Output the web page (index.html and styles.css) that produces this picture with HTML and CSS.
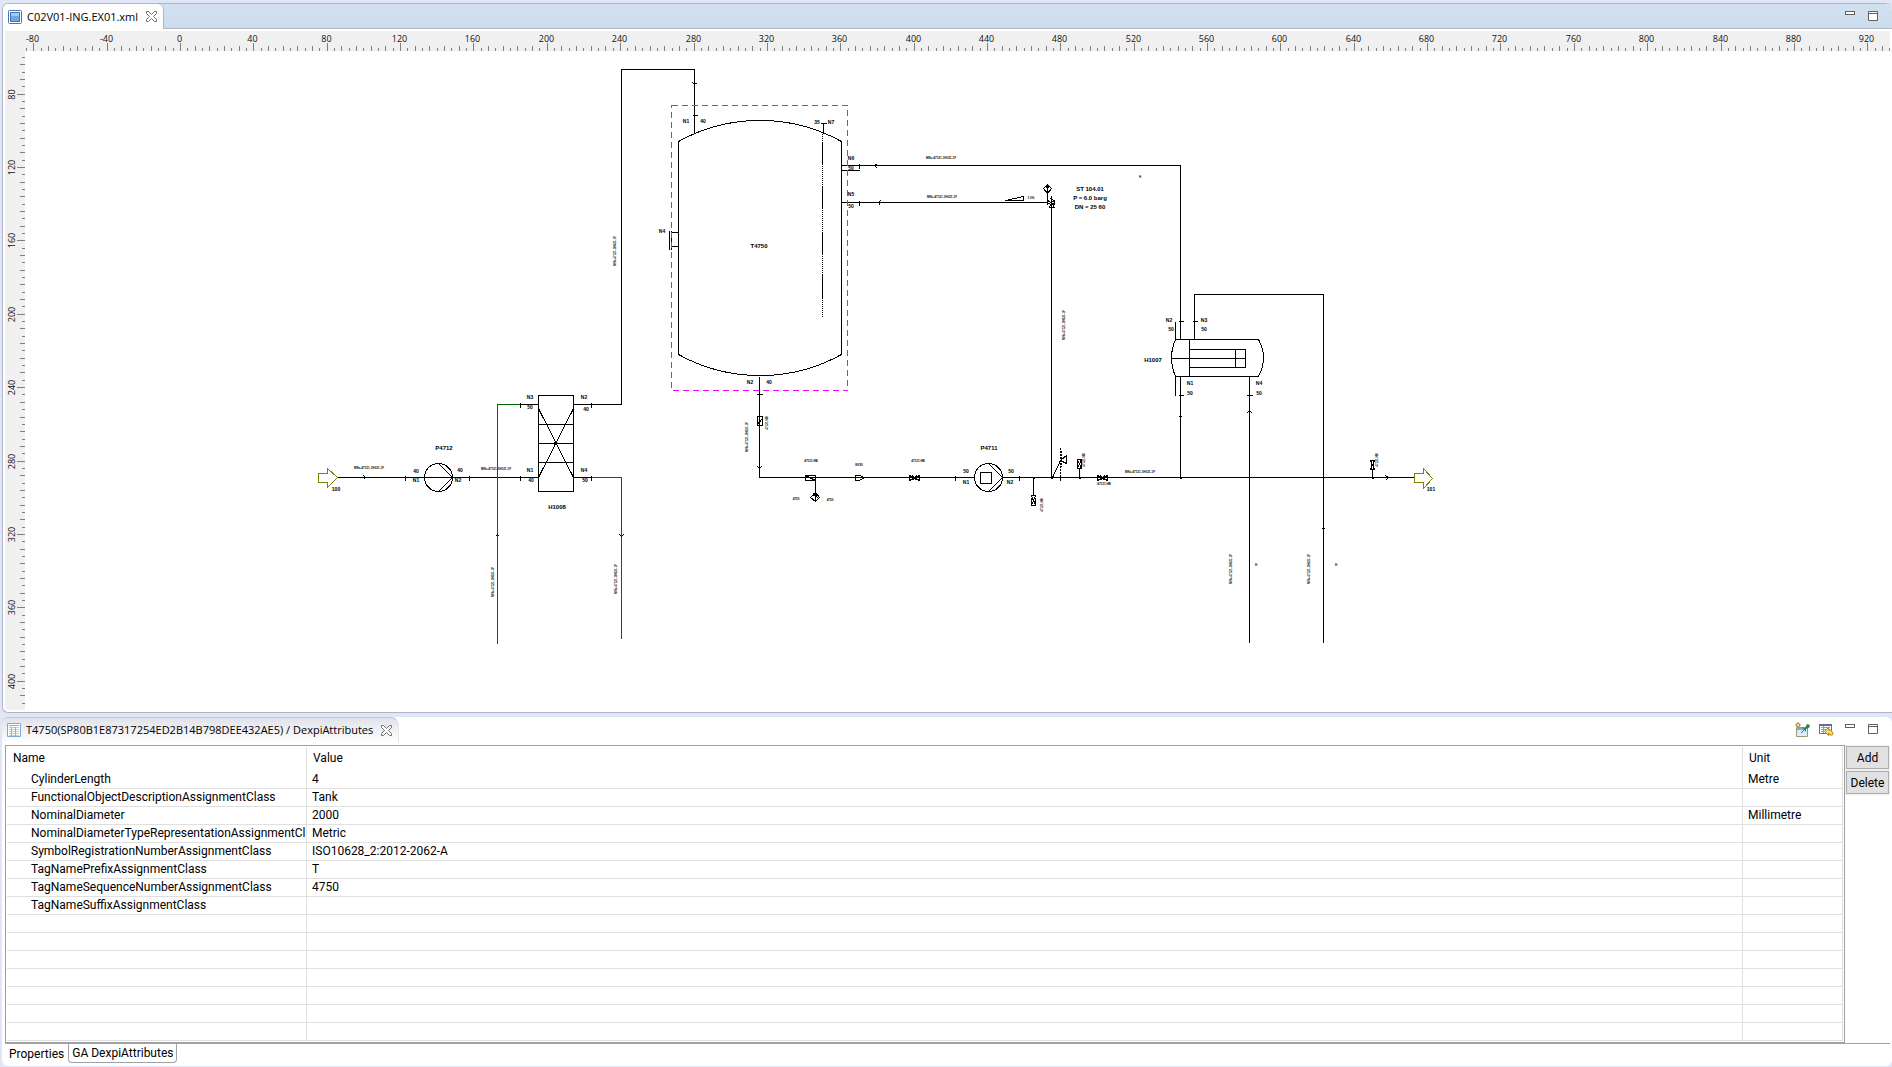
FILE: index.html
```
<!DOCTYPE html>
<html lang="en">
<head>
<meta charset="utf-8">
<title>C02V01-ING.EX01.xml</title>
<link rel="stylesheet" href="styles.css">
</head>
<body>
<svg class="defs" aria-hidden="true">
  <defs>
    <symbol id="close" viewBox="0 0 11 11"><path d="M.5 .5h2l3 3 3-3h2v2l-3 3 3 3v2h-2l-3-3-3 3h-2v-2l3-3-3-3z" fill="#fff" stroke="#6e6e6e"/></symbol>
    <symbol id="min" viewBox="0 0 10 11"><rect x=".5" y=".5" width="9" height="3" fill="#fff" stroke="#606060"/></symbol>
    <symbol id="max" viewBox="0 0 10 11"><path d="M.5 .5h9v9h-9zM0 2.5h10" fill="#fff" stroke="#606060"/></symbol>
  </defs>
</svg>

<main class="panel editor">
  <header class="bar">
    <div class="tab tab-editor">
      <svg class="icon" viewBox="0 0 14 14" width="14" height="14"><rect x=".5" y=".5" width="13" height="13" rx="1" fill="#fff" stroke="#4a72b0"/><rect x="2" y="2" width="10" height="10" fill="#4a72b0"/><path d="M3 3h8v4H3z" fill="#9bd0ea"/><path d="M3 6h8v5H3z" fill="#6ea8dc"/></svg>
      <span>C02V01-ING.EX01.xml</span>
      <button class="ghost" aria-label="Close editor"><svg width="11" height="11"><use href="#close"/></svg></button>
    </div>
    <div class="tools">
      <button class="ghost" aria-label="Minimize editor"><svg width="10" height="11"><use href="#min"/></svg></button>
      <button class="ghost" aria-label="Maximize editor"><svg width="10" height="11"><use href="#max"/></svg></button>
    </div>
  </header>
  <div class="sheet">
    <svg class="ruler ruler-x" id="ruler-x"></svg>
    <svg class="ruler ruler-y" id="ruler-y"></svg>
    <svg class="canvas" role="img" aria-label="Piping and instrumentation diagram">
      <g class="ink" transform="translate(-24.5 -50.5)">
        <!-- process lines -->
        <path d="M573 404H621V69H694V133"/>
        <path d="M841 165H1180V339M1180 376V477M841 170H859"/>
        <path d="M841 202H1047M1051 203V477"/>
        <path d="M759 376V477H974M1002 477H1414"/>
        <path d="M337 477H538M520 404H538M573 477H591"/>
        <path d="M1194 339V294H1323V642M1249 376V642"/>
        <path class="green" d="M520 404H497V643M591 477H621V638"/>

        <!-- flanges -->
        <path d="M692 115h5M820 123h6M823 123v10M859 163v5M859 200v5M756 394h6M955 475v5M1019 475v5M405 475v5M469 475v5M520 475v5M520 402v5M591 402v5M591 475v5M1178 321h5M1192 321h5M1178 395h5M1246 395h6M1060 475v5"/>
        <!-- flow arrows -->
        <path d="M692 82l2 2 3-2M877 163l-3 2 3 3M880 200l-2 2 2 3M757 466l2 2 2-2M363 475l2 2-2 2M495 536l2-2 2 2M619 534l2 2 2-2M1178 417l2-2 2 2M1246 413l3-3 3 3M1321 529l2-2 2 2M1385 475l3 2-3 3"/>

        <!-- tank -->
        <path d="M678 141V354A168 168 0 0 0 841 354V141A168 168 0 0 0 678 141Z"/>
        <path d="M671 232H678M671 246H678M669 230V249M671 230V249"/>
        <path stroke-dasharray="1 1" d="M822 133V316"/>
        <path d="M822 141V164M822 185V207M822 231V253M822 273V297"/>
        <rect class="selection" x="671" y="105" width="176" height="285"/>

        <!-- column -->
        <path d="M538 395H573V491H538ZM538 424H573M538 443H573M538 462H573M538 408L573 477M573 408L538 477"/>
        <rect class="solid" x="554" y="442" width="2" height="2"/>

        <!-- exchanger -->
        <path d="M1175 339H1258Q1268 357 1258 376H1175Q1167 357 1175 339M1189 339V376M1189 349H1245V367H1189M1171 358H1245M1235 349V367M1175 321V339M1175 376V395"/>

        <!-- pumps -->
        <circle cx="438" cy="477" r="14"/><path d="M438 463L452 477 438 491"/>
        <circle cx="988" cy="477" r="14"/><path d="M988 463L1002 477 988 491M980 472H991V483H980Z"/>

        <!-- off-page connectors -->
        <path class="olive" d="M318 473H327V468L337 477 327 487V482H318ZM1414 473H1423V468L1432 478 1423 488V482H1414Z"/>

        <!-- valves and fittings -->
        <path d="M757 416H762V425H757ZM757 424L762 418"/>
        <path d="M805 475H815V480H805ZM805 475L815 480M815 480V501M815 492L819 497 815 501 810 497ZM811 495H818M813 493L818 498"/>
        <path d="M855 475V480H859L864 477 859 475Z"/>
        <path d="M909 475V480L919 475V480ZM912 475L916 480M912 480L916 475M1097 475V480L1107 475V480ZM1100 475L1104 480M1100 480L1104 475"/>
        <path d="M1033 477V495M1031 495H1035L1031 505H1035ZM1031 497V503M1035 497V503M1032 499L1035 502M1079 477V468M1077 459H1081L1077 468H1081ZM1077 460V467M1081 460V467M1372 477V469M1370 460H1374L1370 469H1374ZM1371 460V469M1373 461V467"/>
        <path d="M1052 477L1060 460 1066 455V463L1060 460"/><path stroke-dasharray="2 1" d="M1060 447V477M1061 450V466"/>
        <path d="M1005 200H1023V196Z"/>
        <path d="M1047 184L1051 188 1047 193 1043 188ZM1047 184V202"/><circle class="solid" cx="1047" cy="186" r="1"/>
        <path d="M1047 200L1054 204V200L1047 204ZM1049 207L1051 202 1054 207ZM1051 195V202M1050 198L1053 199"/>
        <path d="M1050 478h2M1032 478h2M1078 478h2M1179 478h2M1371 478h2"/>
      </g>
      <g class="labels" transform="translate(-24 -50)">
        <g class="tag">
          <text x="758" y="247">T4750</text><text x="443" y="449">P4712</text><text x="556" y="508">H1008</text>
          <text x="988" y="449">P4711</text><text x="1152" y="361">H1007</text>
          <text x="1089" y="190">ST 104.01</text><text x="1089" y="199">P = 6.0 barg</text><text x="1089" y="208">DN = 25 60</text>
        </g>
        <g class="nozzle">
          <text x="685" y="122">N1</text><text x="702" y="122">40</text><text x="816" y="123">35</text><text x="830" y="123">N7</text>
          <text x="850" y="159">N6</text><text x="850" y="169">50</text><text x="850" y="195">N5</text><text x="850" y="207">50</text>
          <text x="661" y="232">N4</text><text x="749" y="383">N2</text><text x="768" y="383">40</text>
          <text x="415" y="472">40</text><text x="415" y="481">N1</text><text x="459" y="471">40</text><text x="457" y="481">N2</text>
          <text x="529" y="398">N3</text><text x="529" y="408">50</text><text x="583" y="398">N2</text><text x="585" y="410">40</text>
          <text x="529" y="471">N1</text><text x="530" y="481">40</text><text x="583" y="471">N4</text><text x="584" y="481">50</text>
          <text x="965" y="472">50</text><text x="965" y="483">N1</text><text x="1010" y="472">50</text><text x="1009" y="483">N2</text>
          <text x="1168" y="321">N2</text><text x="1170" y="330">50</text><text x="1203" y="321">N3</text><text x="1203" y="330">50</text>
          <text x="1189" y="384">N1</text><text x="1189" y="394">50</text><text x="1258" y="384">N4</text><text x="1258" y="394">50</text>
          <text x="335" y="490">100</text><text x="1430" y="490">101</text>
        </g>
        <g class="line">
          <text x="940" y="158">MNc-47121-1H021-1F</text><text x="941" y="197">MNc-47121-1H021-1F</text>
          <text x="368" y="468">MNc-47121-1H021-1F</text><text x="495" y="469">MNc-47121-1H021-1F</text><text x="1139" y="472">MNc-47121-1H021-1F</text>
          <text transform="translate(615 250) rotate(-90)">MNc-47121-1H021-1F</text>
          <text transform="translate(493 581) rotate(-90)">MNc-47121-1H021-1F</text>
          <text transform="translate(616 578) rotate(-90)">MNc-47121-1H021-1F</text>
          <text transform="translate(747 436) rotate(-90)">MNc-47121-1H021-1F</text>
          <text transform="translate(1064 324) rotate(-90)">MNc-47121-1H021-1F</text>
          <text transform="translate(1231 568) rotate(-90)">MNc-47121-1H021-1F</text>
          <text transform="translate(1309 568) rotate(-90)">MNc-47121-1H021-1F</text>
          <text x="810" y="461">47121.HB</text><text x="917" y="461">47121.HB</text><text x="858" y="465">80/50</text>
          <text x="795" y="499">4750</text><text x="829" y="500">4750</text><text x="1103" y="484">47121.HB</text><text x="1030" y="198">1.0%</text>
          <text transform="translate(767 422) rotate(-90)">47121.HB</text>
          <text transform="translate(1042 504) rotate(-90)">47121.HB</text>
          <text transform="translate(1084 459) rotate(-90)">47121.HB</text>
          <text transform="translate(1377 459) rotate(-90)">47121.HB</text>
          <text x="1139" y="177">H</text><text x="1255" y="565">H</text><text x="1335" y="565">H</text>
        </g>
      </g>
    </svg>
  </div>
</main>

<section class="panel view">
  <header class="bar">
    <div class="tab tab-view">
      <svg class="icon" viewBox="0 0 14 14" width="14" height="14"><path d="M.5 .5h13v13H.5z" fill="#fff" stroke="#7fa8d8"/><path d="M2 2.5h10" stroke="#8cc063"/><path d="M2 4.5h10M2 6.5h10M2 8.5h10M2 10.5h10M2 12.5h10" stroke="#b4cdea"/><path d="M4.500 4v9M8.500 4v9" stroke="#8fb4de"/></svg>
      <span>T4750(SP80B1E87317254ED2B14B798DEE432AE5) / DexpiAttributes</span>
      <button class="ghost" aria-label="Close view"><svg width="11" height="11"><use href="#close"/></svg></button>
    </div>
    <div class="tools">
      <button class="ghost" aria-label="Pin view"><svg width="15" height="15" viewBox="0 0 15 15"><path d="M1.500 5.500h11v9h-11z" fill="#dceefa" stroke="#9a9a70"/><path d="M2 6h8v2H2z" fill="#78aee0"/><path d="M3 0l3 3-3 3-3-3z" fill="#b98c1e"/><path d="M3 2v2M2 3h2" stroke="#fff"/><path d="M6 11l3-3" stroke="#55a"/><path d="M7 5l3 1 2-4 3 1-1 3-3 1v3z" fill="#2c8a46"/></svg></button>
      <button class="ghost" aria-label="Restore defaults"><svg width="15" height="15" viewBox="0 0 15 15"><path d="M.5 2.500h12v9H.5z" fill="#fff" stroke="#5a6f9c"/><path d="M0 2h13v2H0z" fill="#5a6f9c"/><path d="M2 5.500h9M2 7.500h9M2 9.500h9M4.500 4v7" stroke="#8a9cc0"/><path d="M9.500 5.500v2.500c3 0 5 2 4 5h-3c0-1 0-1.500-1-1.500v2L5.500 9.500z" fill="#fbd66e" stroke="#b98418"/></svg></button>
      <button class="ghost" aria-label="Minimize view"><svg width="10" height="11"><use href="#min"/></svg></button>
      <button class="ghost" aria-label="Maximize view"><svg width="10" height="11"><use href="#max"/></svg></button>
    </div>
  </header>
  <div class="content">
    <div class="table-frame">
      <table>
        <colgroup><col class="c-name"><col><col class="c-unit"></colgroup>
        <thead><tr><th scope="col">Name</th><th scope="col">Value</th><th scope="col">Unit</th></tr></thead>
        <tbody>
          <tr><td>CylinderLength</td><td>4</td><td>Metre</td></tr>
          <tr><td>FunctionalObjectDescriptionAssignmentClass</td><td>Tank</td><td></td></tr>
          <tr><td>NominalDiameter</td><td>2000</td><td>Millimetre</td></tr>
          <tr><td>NominalDiameterTypeRepresentationAssignmentClass</td><td>Metric</td><td></td></tr>
          <tr><td>SymbolRegistrationNumberAssignmentClass</td><td>ISO10628_2:2012-2062-A</td><td></td></tr>
          <tr><td>TagNamePrefixAssignmentClass</td><td>T</td><td></td></tr>
          <tr><td>TagNameSequenceNumberAssignmentClass</td><td>4750</td><td></td></tr>
          <tr><td>TagNameSuffixAssignmentClass</td><td></td><td></td></tr>
          <tr><td></td><td></td><td></td></tr>
          <tr><td></td><td></td><td></td></tr>
          <tr><td></td><td></td><td></td></tr>
          <tr><td></td><td></td><td></td></tr>
          <tr><td></td><td></td><td></td></tr>
          <tr><td></td><td></td><td></td></tr>
          <tr><td></td><td></td><td></td></tr>
        </tbody>
      </table>
    </div>
    <div class="actions"><button class="push">Add</button><button class="push">Delete</button></div>
  </div>
  <nav class="pages"><button class="page">Properties</button><button class="page current">GA DexpiAttributes</button></nav>
</section>
<script src="rulers.js"></script>
</body>
</html>
```
FILE: styles.css
```
* { box-sizing: border-box; }
body {
  margin: 0;
  padding: 3px 0 1px 2px;
  height: 100vh;
  display: flex;
  flex-direction: column;
  gap: 4px;
  overflow: hidden;
  background: #e0e6f6;
  color: #000;
  font: 12px/16px Roboto, "Open Sans", sans-serif;
}
.defs { position: absolute; width: 0; height: 0; }
button { font: inherit; color: inherit; }
svg { display: block; }

.panel { background: #fff; display: flex; flex-direction: column; }
.editor {
  flex: 1;
  min-height: 0;
  border: 1px solid #b0b5c8;
  border-right-width: 0;
  border-radius: 6px 6px 0 6px;
  padding-bottom: 2px;
}
.view { border-radius: 6px; padding-left: 3px; }

.bar { display: flex; justify-content: space-between; flex: none; }
.editor .bar {
  height: 25px;
  background: linear-gradient(#d2e1ef, #cbdcec);
  border-bottom: 1px solid #b0b5c8;
  border-radius: 6px 6px 0 0;
}
.view .bar { height: 28px; }
.tab { display: flex; align-items: center; gap: 5px; }
.tab .icon { flex: none; }
.tab .ghost { margin-left: 3px; }
.tab-editor {
  height: 25px;
  padding: 0 6px 0 5px;
  background: #fff;
  border-right: 1px solid #b0b5c8;
  border-radius: 5px 6px 0 0;
  font: 11px/16px "Open Sans", sans-serif;
}
.tab-view {
  height: 25px;
  margin-left: -3px;
  padding: 0 6px 0 5px;
  background: linear-gradient(#e1e2ea, #fff);
  border-top: 1px solid #c4c6d2;
  border-right: 1px solid #e4e4ec;
  border-radius: 6px 8px 0 0;
  font: 11px/16px "Open Sans", sans-serif;
}
.ghost { border: 0; padding: 0; background: none; }
.tools { display: flex; gap: 13px; padding: 7px 14px 0 0; align-items: flex-start; }
.view .tools { gap: 9px; padding-top: 5px; }
.view .tools .ghost { height: 15px; display: flex; align-items: center; }
.view .tools .ghost:nth-child(n+3) { margin-left: 2px; }
.view .tools .ghost:last-child { margin-left: 4px; }

.sheet {
  flex: 1;
  min-height: 0;
  display: grid;
  grid-template: 20px 1fr / 20px 1fr;
  margin: 2px 2px 0;
}
.ruler { background: #f0f0f0; width: 100%; height: 100%; overflow: hidden; }
.ruler-x { grid-area: 1 / 1 / 2 / 3; }
.ruler-y { grid-area: 2 / 1; }
.ruler path { stroke: #808080; shape-rendering: crispEdges; }
.ruler text { font: 9px "Open Sans", sans-serif; text-anchor: middle; fill: #111; }
.canvas { grid-area: 2 / 2; width: 100%; height: 100%; overflow: hidden; }
.ink { fill: none; stroke: #000; shape-rendering: crispEdges; }
.ink .green { stroke: #006a00; }
.ink .olive { stroke: #808000; }
.ink .solid { fill: #000; }
.ink .selection { stroke: #f0f; stroke-dasharray: 6 4; }
.labels { font-family: "Liberation Sans Narrow", "Liberation Sans", sans-serif; font-weight: 700; text-anchor: middle; }
.tag { font-size: 6px; }
.nozzle { font-size: 5px; }
.line { font-size: 3px; }

.content { display: flex; align-items: flex-start; border-bottom: 1px solid #a0a0a8; margin-right: 2px; }
.table-frame { flex: 1; min-width: 0; border: 1px solid #a0a0a0; padding: 1px; }
table { width: 100%; border-collapse: separate; border-spacing: 0; table-layout: fixed; }
.c-name { width: 300px; }
.c-unit { width: 100px; }
th, td {
  height: 18px;
  padding: 0 0 0 5px;
  border-right: 1px solid #e0e0e0;
  border-bottom: 1px solid #e0e0e0;
  text-align: left;
  font-weight: 400;
  white-space: nowrap;
  overflow: hidden;
  line-height: 17px;
}
th { height: 24px; border-bottom: 0; padding: 0 0 1px 6px; }
td:first-child { padding-left: 24px; }
.actions { display: flex; flex-direction: column; gap: 2px; padding: 1px 1px 0; width: 45px; }
.push { height: 23px; padding: 0; background: #e1e1e1; border: 1px solid #adadad; outline: 1px solid #f0f0f0; }
.pages { display: flex; height: 22px; align-items: flex-start; }
.page { height: 19px; padding: 0 4px; background: none; border: 0; }
.current { border: 1px solid #a0a0a8; border-top: 0; border-radius: 0 0 4px 4px; background: #fff; padding: 0 3px; }
```
FILE: rulers.js
```
// Draws the drawing-sheet rulers: a tick every 4 units, a label every 40.
const SCALE = 1.834;
function draw(id, origin, from, to, vertical) {
  const ruler = document.getElementById(id);
  let ticks = "", labels = "";
  for (let v = from; v <= to; v += 4) {
    const p = Math.round(origin + v * SCALE) + 0.5;
    const size = v % 40 === 0 ? 8 : v % 8 === 0 ? 5 : 3;
    ticks += vertical ? `M20 ${p}h${-size}` : `M${p} 20v${-size}`;
    if (v % 40 === 0) {
      labels += vertical
        ? `<text transform="translate(10 ${p}) rotate(-90)">${v}</text>`
        : `<text x="${p - 1}" y="11">${v}</text>`;
    }
  }
  ruler.innerHTML = `<path d="${ticks}"/>${labels}`;
}
draw("ruler-x", 175, -84, 932, false);
draw("ruler-y", -104, 60, 416, true);
```
